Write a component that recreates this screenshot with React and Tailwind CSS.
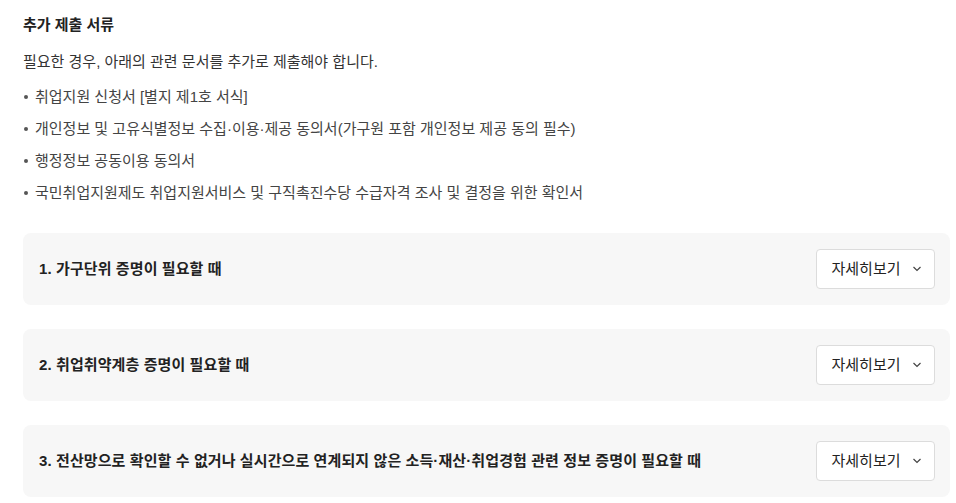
import React from 'react';

const bullets = [
  "취업지원 신청서 [별지 제1호 서식]",
  "개인정보 및 고유식별정보 수집·이용·제공 동의서(가구원 포함 개인정보 제공 동의 필수)",
  "행정정보 공동이용 동의서",
  "국민취업지원제도 취업지원서비스 및 구직촉진수당 수급자격 조사 및 결정을 위한 확인서",
];

const sections = [
  "1. 가구단위 증명이 필요할 때",
  "2. 취업취약계층 증명이 필요할 때",
  "3. 전산망으로 확인할 수 없거나 실시간으로 연계되지 않은 소득·재산·취업경험 관련 정보 증명이 필요할 때",
];

const Chevron = () => (
  <svg width="10" height="10" viewBox="0 0 10 10" fill="none" stroke="#444" strokeWidth="1.2">
    <path d="M1.5 3 L5 6.5 L8.5 3" />
  </svg>
);

const App = () => {
  return (
    <div className="w-full bg-white pl-[23px] pr-[6px] pt-[13px] text-[#333]" style={{ fontFamily: '"Liberation Sans", "Noto Sans CJK KR", sans-serif' }}>
      <h3 className="text-[15px] font-bold leading-[24px] text-[#222]">추가 제출 서류</h3>
      <p className="mt-[13px] text-[15px] leading-[24px]">필요한 경우, 아래의 관련 문서를 추가로 제출해야 합니다.</p>
      <ul className="mt-[11px] flex flex-col gap-[8px]">
        {bullets.map((b) => (
          <li key={b} className="flex items-center text-[15px] leading-[24px] text-[#444]">
            <span className="mr-[7px] ml-[1px] inline-block h-[4px] w-[4px] rounded-full bg-[#555]" />
            {b}
          </li>
        ))}
      </ul>
      <div className="mt-[28px] flex flex-col gap-[24px]">
        {sections.map((s) => (
          <div key={s} className="flex h-[72px] items-center justify-between rounded-[8px] bg-[#f7f7f7] pl-[16px] pr-[15px]">
            <p className="text-[15px] font-bold tracking-[0.1px] text-[#222]">{s}</p>
            <button className="flex h-[40px] w-[119px] items-center justify-center gap-[11px] rounded-[4px] border border-[#dcdcdc] bg-white pl-[2px] text-[15px] text-[#222]">
              자세히보기
              <Chevron />
            </button>
          </div>
        ))}
      </div>
    </div>
  );
};

export default App;
